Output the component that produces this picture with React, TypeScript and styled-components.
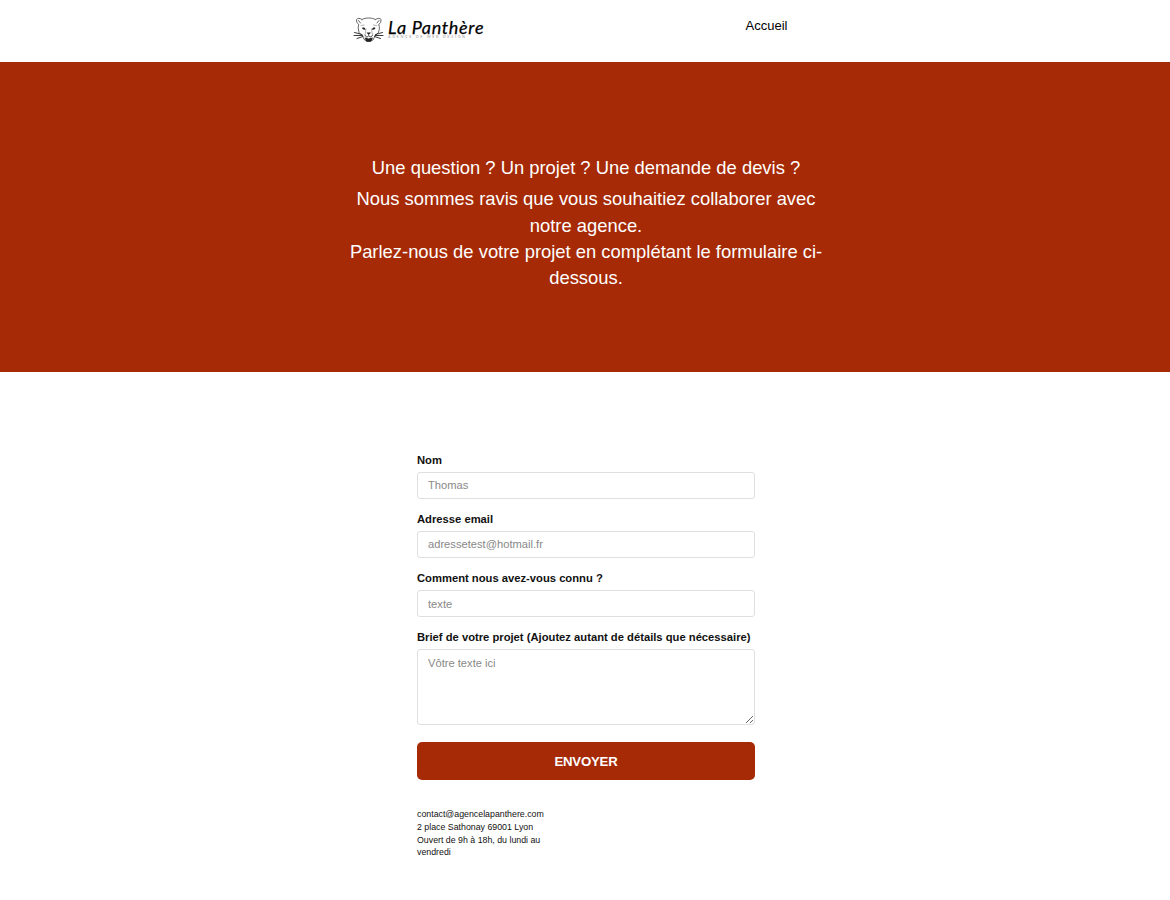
import React from 'react';
import styled, { createGlobalStyle } from 'styled-components';

const BRAND = '#a62a05';

const GlobalStyle = createGlobalStyle`
  *, *::before, *::after { box-sizing: border-box; }
  body {
    margin: 0;
    background: #fff;
    color: #111;
    font-family: "Liberation Sans", Arial, sans-serif;
  }
`;

const Page = styled.div`
  display: flex;
  flex-direction: column;
  height: 900px;
  overflow: hidden;
`;

const Header = styled.header`
  display: flex;
  justify-content: space-between;
  align-items: flex-start;
  width: 464px;
  height: 62px;
  margin: 0 auto;
  padding: 14px 29.5px 0 0;
`;

const Logo = styled.svg`
  display: block;
  width: 134px;
  height: 30px;
`;

const NavLink = styled.a`
  padding-top: 4px;
  font-size: 13px;
  line-height: 15px;
  color: #000;
  text-decoration: none;
`;

const Hero = styled.section`
  display: flex;
  flex-direction: column;
  align-items: center;
  height: 310px;
  padding-top: 93px;
  background: ${BRAND};
  color: #fff;
  font-size: 18.4px;
  line-height: 26.3px;
  text-align: center;
`;

const HeroTitle = styled.h1`
  margin: 0 0 5px 2px;
  font-size: inherit;
  font-weight: 400;
`;

const HeroText = styled.p`
  width: 476px;
  margin: 0 0 0 2px;
`;

const Main = styled.main`
  width: 338px;
  margin: 81px auto 0;
  position: relative;
  left: 1px;
`;

const Field = styled.div<{ $gap?: number }>`
  display: flex;
  flex-direction: column;
  margin-bottom: ${({ $gap = 13 }) => $gap}px;
`;

const Label = styled.label`
  margin-bottom: 4px;
  font-size: 11.22px;
  font-weight: 700;
  line-height: 15px;
`;

const controlStyle = `
  display: block;
  width: 100%;
  border: 1px solid #dfdfdf;
  border-radius: 3px;
  background: #fff;
  font-family: inherit;
  font-size: 11.17px;
  outline: none;
  &::placeholder { color: #888; opacity: 1; }
`;

const Input = styled.input<{ $drop?: boolean }>`
  ${controlStyle}
  height: 27px;
  padding: 0 10px ${({ $drop }) => ($drop ? 0 : 2)}px;
`;

const TextArea = styled.textarea`
  ${controlStyle}
  height: 76px;
  padding: 6px 10px;
  line-height: 15px;
  resize: vertical;
`;

const Submit = styled.button`
  display: block;
  width: 100%;
  height: 38px;
  border: 0;
  border-radius: 5px;
  background: ${BRAND};
  color: #fff;
  font-family: inherit;
  font-size: 13.2px;
  letter-spacing: -0.2px;
  font-weight: 700;
`;

const Address = styled.address`
  width: 140px;
  margin-top: 28px;
  font-size: 8.8px;
  font-style: normal;
  line-height: 12.75px;
`;

function PantherLogo() {
  return (
    <Logo viewBox="0 0 134 30" role="img" aria-label="La Panthère">
      <g fill="none" stroke="#555" strokeWidth="0.9" strokeLinecap="round" strokeLinejoin="round">
        <path d="M9 5.500C7.500 4 4 4 3.500 5.500c-.2 2 .7 4 2.300 5C5 12.500 5 15 6 18M22.500 5.500c1.500-1.500 5-1.500 5.500 0 .2 2-.7 4-2.300 5 1 2.500 1 5-.2 7.500M9 5.500c2-1 4-1.500 6.700-1.500s4.800.5 6.800 1.500" />
        <path d="M5.500 6.500l2 2.500M26 6.500L24 9M6 18.500l3.500 3.500 2 4 4.200 1.500 4.300-1.500 2-4 3.500-3.500" />
        <path d="M13 15l-.8 5M18.500 15l.8 5M8 11.500l3-.5M23.500 11.500l-3-.5" stroke="#aaa" />
      </g>
      <g fill="none" stroke="#222" strokeWidth="0.9" strokeLinecap="round">
        <path d="M9 20.500L1.500 18.500M9.500 21.500L1 21.500M10 22.500L4 24.500M22.500 20.500l7-2M22 21.500l8 0M21.500 22.500l6 2" />
        <path d="M12 21c.5 2.500 3 2.500 3.700.5.8 2 3.200 2 3.800-.5" />
      </g>
      <g fill="#222">
        <path d="M9 14c1.500-1 3-.5 3.500 1.500-1.500.5-2.800.2-3.500-1.500zM22.500 14c-1.500-1-3-.5-3.500 1.500 1.500.5 2.800.2 3.500-1.500zM13.500 18.500h4.500L15.700 21zM11.500 23.500l4.200 1 4.300-1-2 4.200h-4.600z" />
      </g>
      <text x="35" y="19.500" fill="#000" stroke="#000" strokeWidth="0.25" fontFamily="Lato, sans-serif" fontStyle="italic" fontWeight="400" fontSize="18" textLength="95.500" lengthAdjust="spacing">La Panthère</text>
      <text x="35" y="23.500" fill="#999" fontFamily="Lato, sans-serif" fontSize="3.800" textLength="77">AGENCE DE WEB DESIGN</text>
    </Logo>
  );
}

export default function App() {
  return (
    <>
      <GlobalStyle />
      <Page>
        <Header>
          <PantherLogo />
          <NavLink href="#">Accueil</NavLink>
        </Header>
        <Hero>
          <HeroTitle>Une question ? Un projet ? Une demande de devis ?</HeroTitle>
          <HeroText>
            Nous sommes ravis que vous souhaitiez collaborer avec notre agence.
            <br />
            Parlez-nous de votre projet en complétant le formulaire ci-dessous.
          </HeroText>
        </Hero>
        <Main>
          <form onSubmit={(e) => e.preventDefault()}>
            <Field>
              <Label htmlFor="nom">Nom</Label>
              <Input id="nom" placeholder="Thomas" />
            </Field>
            <Field>
              <Label htmlFor="email">Adresse email</Label>
              <Input id="email" type="email" placeholder="adressetest@hotmail.fr" />
            </Field>
            <Field>
              <Label htmlFor="source">Comment nous avez-vous connu ?</Label>
              <Input id="source" $drop placeholder="texte" />
            </Field>
            <Field $gap={17}>
              <Label htmlFor="brief">Brief de votre projet (Ajoutez autant de détails que nécessaire)</Label>
              <TextArea id="brief" placeholder="Vôtre texte ici" />
            </Field>
            <Submit type="submit">ENVOYER</Submit>
          </form>
          <Address>
            contact@agencelapanthere.com
            <br />2 place Sathonay 69001 Lyon
            <br />
            Ouvert de 9h à 18h, du lundi au vendredi
          </Address>
        </Main>
      </Page>
    </>
  );
}
